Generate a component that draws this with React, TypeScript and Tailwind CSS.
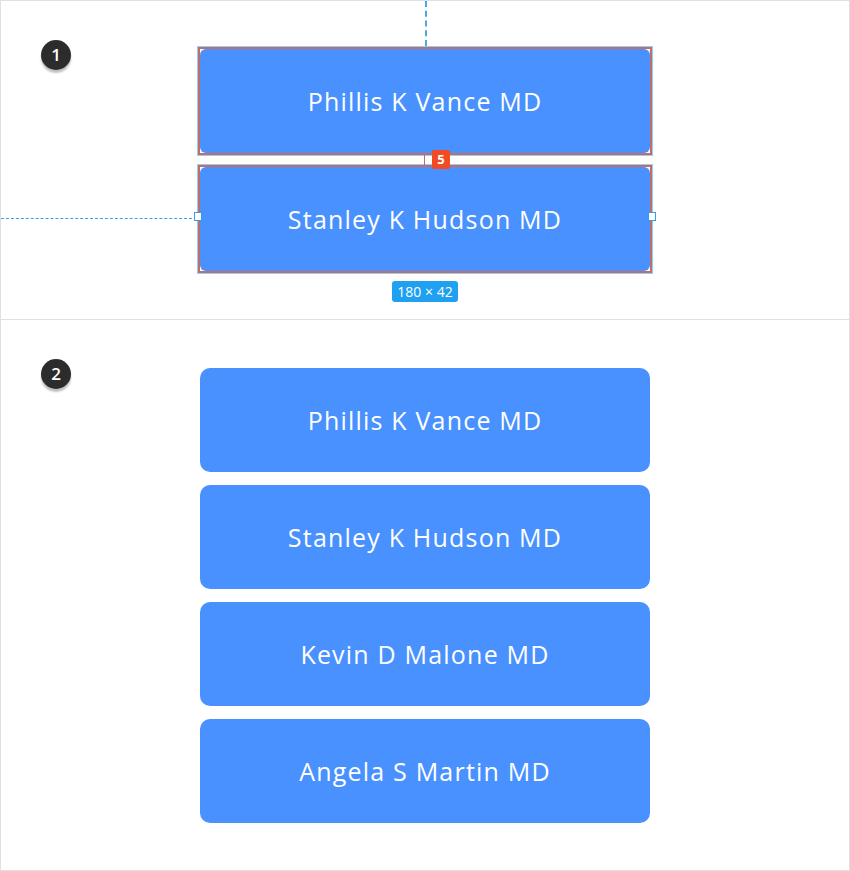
const font = { fontFamily: '"Open Sans", "Liberation Sans", sans-serif' };

function StepBadge({ n }: { n: number }) {
  return (
    <div className="absolute left-[40px] top-[39px] flex h-[30px] w-[30px] items-center justify-center rounded-full bg-[#2c2c2c] text-[17px] font-semibold text-white shadow-[0_3px_2px_rgba(0,0,0,0.25)]">
      {n}
    </div>
  );
}

function Doctor({ name, sharp }: { name: string; sharp?: boolean }) {
  return (
    <div
      className={`flex h-[104px] w-[450px] items-center justify-center bg-[#4891fe] pt-[2px] text-[25px] font-medium tracking-[1.2px] text-white ${
        sharp ? 'rounded-[6px]' : 'rounded-[10px]'
      }`}
    >
      {name}
    </div>
  );
}

function Selected({ name, handles }: { name: string; handles?: boolean }) {
  return (
    <div className="relative outline outline-1 outline-[#8fd0f5]">
      <div className="border-2 border-[#c46d68] bg-white">
        <Doctor name={name} sharp />
      </div>
      {handles && (
        <>
          <div className="absolute left-[-4px] top-[47px] h-[9px] w-[8px] border border-[#3a9be0] bg-white" />
          <div className="absolute right-[-4px] top-[47px] h-[9px] w-[8px] border border-[#3a9be0] bg-white" />
        </>
      )}
    </div>
  );
}

export default function App() {
  const list = ['Phillis K Vance MD', 'Stanley K Hudson MD', 'Kevin D Malone MD', 'Angela S Martin MD'];
  return (
    <div className="h-[871px] w-[850px] border border-[#e0e0e0] bg-white" style={font}>
      {/* Step 1 */}
      <section className="relative flex h-[319px] flex-col items-center border-b border-[#e0e0e0] pt-[46px]">
        <StepBadge n={1} />
        <div className="absolute left-[424px] top-0 h-[45px] border-l-2 border-dashed border-[#47a8ea]" />
        <div className="absolute left-0 top-[217px] w-[196px] border-t border-dashed border-[#3aa0e0]" />

        <Selected name="Phillis K Vance MD" />
        <div className="relative z-10 h-[10px] w-[450px]">
          <div className="absolute left-[224px] top-0 h-[10px] border-l border-[#c9655f]" />
          <div className="absolute left-[232px] top-[-5px] flex h-[19px] w-[18px] items-center justify-center rounded-[2px] bg-[#f04b23] text-[13px] font-bold text-white">
            5
          </div>
        </div>
        <Selected name="Stanley K Hudson MD" handles />

        <div className="mt-[8px] rounded-[3px] bg-[#1fa0f0] px-[5px] py-[1px] text-[14px] leading-[19px] text-white">
          180 × 42
        </div>
      </section>

      {/* Step 2 */}
      <section className="relative flex flex-col items-center gap-[13px] pt-[48px]">
        <StepBadge n={2} />
        {list.map((n) => (
          <Doctor key={n} name={n} />
        ))}
      </section>
    </div>
  );
}
